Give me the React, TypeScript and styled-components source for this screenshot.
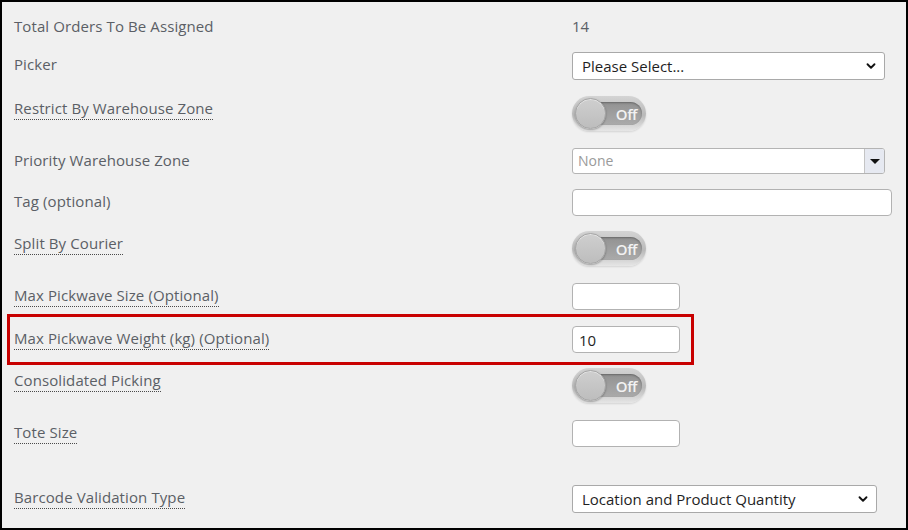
import React from "react";
import styled, { createGlobalStyle } from "styled-components";
import { ChevronDown } from "lucide-react";

const GlobalStyle = createGlobalStyle`
  html, body {
    margin: 0;
    padding: 0;
    background: #f0f0f0;
  }
  * {
    box-sizing: border-box;
  }
`;

const Frame = styled.div`
  width: 908px;
  height: 530px;
  border: 2px solid #000;
  background: #f0f0f0;
  padding-top: 12px;
  font-family: "Open Sans", "Noto Sans", sans-serif;
  font-size: 15px;
  color: #5b5f66;
  overflow: hidden;
`;

const Row = styled.div<{ $height: number }>`
  position: relative;
  display: grid;
  grid-template-columns: 558px 1fr;
  align-items: start;
  height: ${({ $height }) => $height}px;
  padding-left: 12px;
`;

const Label = styled.div`
  line-height: 24px;
  letter-spacing: 0.1px;
`;

const HintLabel = styled.span`
  border-bottom: 1px dotted #4a4a4a;
  padding-bottom: 1px;
`;

const Value = styled.div`
  line-height: 24px;
  color: #5b5f66;
`;

const Highlight = styled.div`
  position: absolute;
  top: -12px;
  left: 5px;
  width: 687px;
  height: 51px;
  border: 3px solid #c80000;
  pointer-events: none;
`;

const SelectWrap = styled.div<{ $width: number }>`
  position: relative;
  width: ${({ $width }) => $width}px;
  height: 28px;
`;

const NativeSelect = styled.select`
  appearance: none;
  width: 100%;
  height: 100%;
  border: 1px solid #a9a9a9;
  border-radius: 3px;
  background: #fff;
  padding: 0 28px 0 9px;
  font-family: "Open Sans", "Noto Sans", sans-serif;
  font-size: 15px;
  color: #1f1f1f;
  outline: none;
`;

const Chevron = styled(ChevronDown)`
  position: absolute;
  right: 7px;
  top: 7px;
  pointer-events: none;
  color: #111;
`;

const ComboBox = styled.div`
  display: flex;
  width: 313px;
  height: 26px;
  border: 1px solid #b4b4b4;
  border-radius: 3px;
  background: #fff;
  overflow: hidden;
`;

const ComboText = styled.div`
  flex: 1;
  padding-left: 5px;
  line-height: 24px;
  font-size: 14px;
  color: #9a9a9a;
`;

const ComboButton = styled.div`
  width: 20px;
  border-left: 1px solid #c4c4c4;
  background: #e6e9f1;
  display: flex;
  align-items: center;
  justify-content: center;
`;

const Triangle = styled.span`
  width: 0;
  height: 0;
  border-left: 5px solid transparent;
  border-right: 5px solid transparent;
  border-top: 5px solid #111;
  margin-top: 1px;
`;

const TextInput = styled.input<{ $width: number }>`
  width: ${({ $width }) => $width}px;
  height: 27px;
  border: 1px solid #b2b2b2;
  border-radius: 4px;
  background: #fff;
  padding: 0 6px;
  font-family: "Open Sans", "Noto Sans", sans-serif;
  font-size: 15px;
  color: #1f1f1f;
  outline: none;
`;

const Toggle = styled.div`
  position: relative;
  width: 74px;
  height: 35px;
  border-radius: 18px;
  background: linear-gradient(#d4d4d4, #b9b9b9 55%, #e6e6e6);
  box-shadow: 0 1px 2px rgba(0, 0, 0, 0.12);
`;

const ToggleTrack = styled.div`
  position: absolute;
  left: 10px;
  right: 4px;
  top: 6px;
  bottom: 6px;
  border-radius: 12px;
  background: linear-gradient(#929292, #aaaaaa);
  box-shadow: inset 0 1px 2px rgba(0, 0, 0, 0.3);
  display: flex;
  align-items: center;
  justify-content: flex-end;
  padding-right: 5px;
  font-family: "Open Sans", "Noto Sans", sans-serif;
  font-size: 15px;
  font-weight: 600;
  letter-spacing: -0.5px;
  color: #f2f2f2;
`;

const ToggleKnob = styled.div`
  position: absolute;
  left: 3px;
  top: 2px;
  width: 31px;
  height: 31px;
  border-radius: 50%;
  background: linear-gradient(#cfcfcf, #bdbdbd);
  border: 1px solid #a6a6a6;
  box-shadow: 0 1px 2px rgba(0, 0, 0, 0.3), inset 0 1px 0 #e4e4e4;
`;

function OffSwitch() {
  return (
    <Toggle>
      <ToggleTrack>Off</ToggleTrack>
      <ToggleKnob />
    </Toggle>
  );
}

function Select({ width, value }: { width: number; value: string }) {
  return (
    <SelectWrap $width={width}>
      <NativeSelect defaultValue={value}>
        <option>{value}</option>
      </NativeSelect>
      <Chevron size={14} strokeWidth={3.2} />
    </SelectWrap>
  );
}

export default function App() {
  return (
    <>
      <GlobalStyle />
      <Frame>
        <Row $height={38}>
          <Label>Total Orders To Be Assigned</Label>
          <Value>14</Value>
        </Row>
        <Row $height={44}>
          <Label>Picker</Label>
          <Select width={313} value="Please Select..." />
        </Row>
        <Row $height={52}>
          <Label>
            <HintLabel>Restrict By Warehouse Zone</HintLabel>
          </Label>
          <OffSwitch />
        </Row>
        <Row $height={41}>
          <Label>Priority Warehouse Zone</Label>
          <ComboBox>
            <ComboText>None</ComboText>
            <ComboButton>
              <Triangle />
            </ComboButton>
          </ComboBox>
        </Row>
        <Row $height={42}>
          <Label>Tag (optional)</Label>
          <TextInput $width={320} />
        </Row>
        <Row $height={52}>
          <Label>
            <HintLabel>Split By Courier</HintLabel>
          </Label>
          <OffSwitch />
        </Row>
        <Row $height={43}>
          <Label>
            <HintLabel>Max Pickwave Size (Optional)</HintLabel>
          </Label>
          <TextInput $width={108} />
        </Row>
        <Row $height={42}>
          <Highlight />
          <Label>
            <HintLabel>Max Pickwave Weight (kg) (Optional)</HintLabel>
          </Label>
          <TextInput $width={108} defaultValue="10" />
        </Row>
        <Row $height={52}>
          <Label>
            <HintLabel>Consolidated Picking</HintLabel>
          </Label>
          <OffSwitch />
        </Row>
        <Row $height={65}>
          <Label>
            <HintLabel>Tote Size</HintLabel>
          </Label>
          <TextInput $width={108} />
        </Row>
        <Row $height={40}>
          <Label>
            <HintLabel>Barcode Validation Type</HintLabel>
          </Label>
          <Select width={305} value="Location and Product Quantity" />
        </Row>
      </Frame>
    </>
  );
}
